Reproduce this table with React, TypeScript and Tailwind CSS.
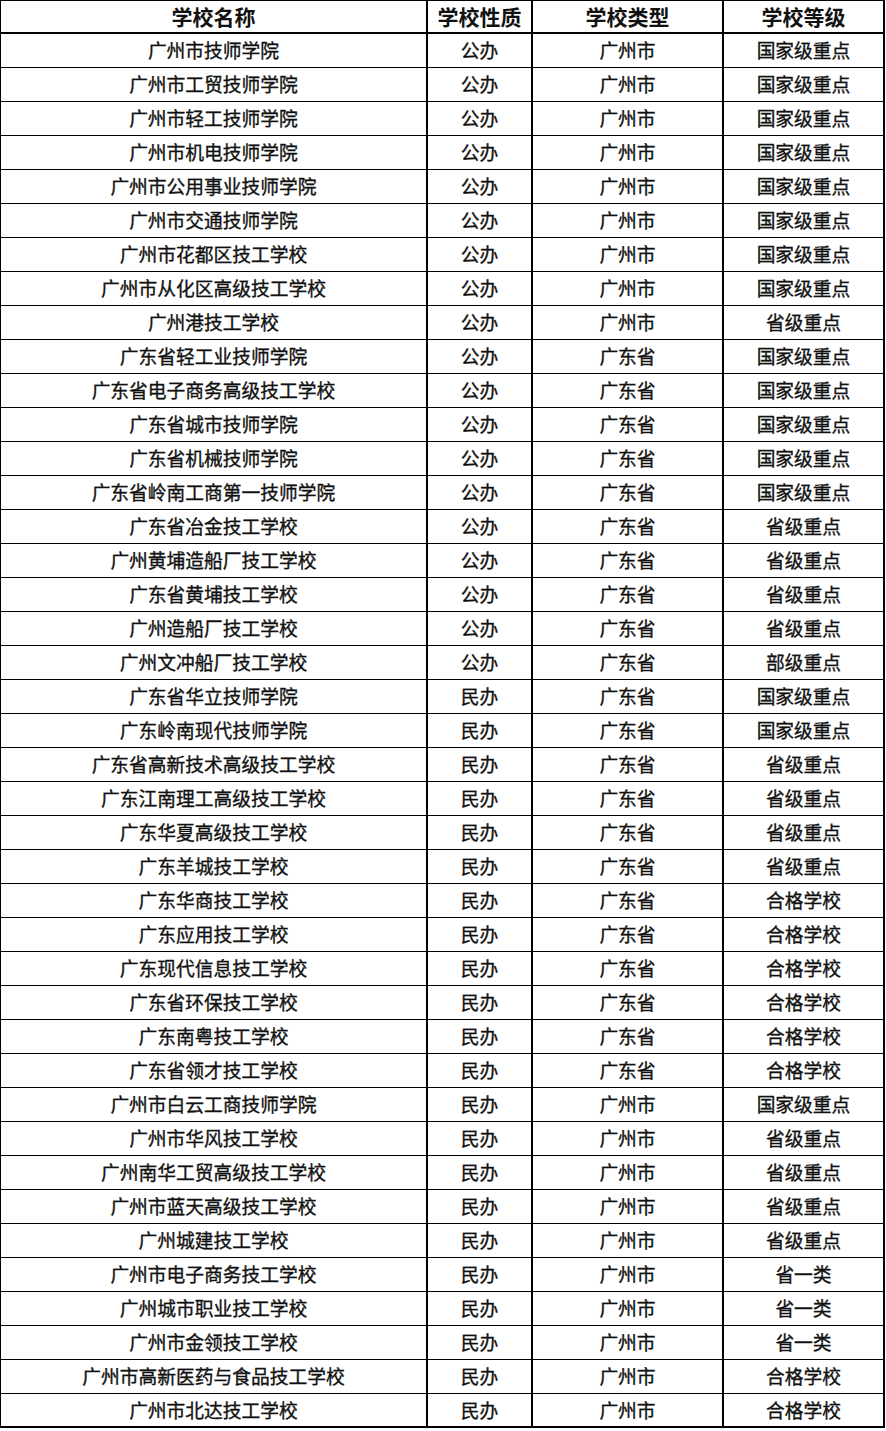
const rows: [string, string, string, string][] = [
  ['广州市技师学院', '公办', '广州市', '国家级重点'],
  ['广州市工贸技师学院', '公办', '广州市', '国家级重点'],
  ['广州市轻工技师学院', '公办', '广州市', '国家级重点'],
  ['广州市机电技师学院', '公办', '广州市', '国家级重点'],
  ['广州市公用事业技师学院', '公办', '广州市', '国家级重点'],
  ['广州市交通技师学院', '公办', '广州市', '国家级重点'],
  ['广州市花都区技工学校', '公办', '广州市', '国家级重点'],
  ['广州市从化区高级技工学校', '公办', '广州市', '国家级重点'],
  ['广州港技工学校', '公办', '广州市', '省级重点'],
  ['广东省轻工业技师学院', '公办', '广东省', '国家级重点'],
  ['广东省电子商务高级技工学校', '公办', '广东省', '国家级重点'],
  ['广东省城市技师学院', '公办', '广东省', '国家级重点'],
  ['广东省机械技师学院', '公办', '广东省', '国家级重点'],
  ['广东省岭南工商第一技师学院', '公办', '广东省', '国家级重点'],
  ['广东省冶金技工学校', '公办', '广东省', '省级重点'],
  ['广州黄埔造船厂技工学校', '公办', '广东省', '省级重点'],
  ['广东省黄埔技工学校', '公办', '广东省', '省级重点'],
  ['广州造船厂技工学校', '公办', '广东省', '省级重点'],
  ['广州文冲船厂技工学校', '公办', '广东省', '部级重点'],
  ['广东省华立技师学院', '民办', '广东省', '国家级重点'],
  ['广东岭南现代技师学院', '民办', '广东省', '国家级重点'],
  ['广东省高新技术高级技工学校', '民办', '广东省', '省级重点'],
  ['广东江南理工高级技工学校', '民办', '广东省', '省级重点'],
  ['广东华夏高级技工学校', '民办', '广东省', '省级重点'],
  ['广东羊城技工学校', '民办', '广东省', '省级重点'],
  ['广东华商技工学校', '民办', '广东省', '合格学校'],
  ['广东应用技工学校', '民办', '广东省', '合格学校'],
  ['广东现代信息技工学校', '民办', '广东省', '合格学校'],
  ['广东省环保技工学校', '民办', '广东省', '合格学校'],
  ['广东南粤技工学校', '民办', '广东省', '合格学校'],
  ['广东省领才技工学校', '民办', '广东省', '合格学校'],
  ['广州市白云工商技师学院', '民办', '广州市', '国家级重点'],
  ['广州市华风技工学校', '民办', '广州市', '省级重点'],
  ['广州南华工贸高级技工学校', '民办', '广州市', '省级重点'],
  ['广州市蓝天高级技工学校', '民办', '广州市', '省级重点'],
  ['广州城建技工学校', '民办', '广州市', '省级重点'],
  ['广州市电子商务技工学校', '民办', '广州市', '省一类'],
  ['广州城市职业技工学校', '民办', '广州市', '省一类'],
  ['广州市金领技工学校', '民办', '广州市', '省一类'],
  ['广州市高新医药与食品技工学校', '民办', '广州市', '合格学校'],
  ['广州市北达技工学校', '民办', '广州市', '合格学校'],
];

const header = ['学校名称', '学校性质', '学校类型', '学校等级'];

function Row({ cells, head, last }: { cells: string[]; head?: boolean; last?: boolean }) {
  return (
    <div
      className={
        'grid h-[34px] grid-cols-[427px_105px_191px_1fr] border-black ' +
        (head
          ? 'border-t border-b-2 text-[21px] font-bold'
          : (last ? 'border-b-2 ' : 'border-b ') + 'text-[18.75px] [-webkit-text-stroke:0.35px_#111]')
      }
    >
      {cells.map((c, i) => (
        <div
          key={i}
          className={'flex items-center justify-center leading-none ' + (i < 3 ? 'border-r-2 border-black' : '')}
        >
          {c}
        </div>
      ))}
    </div>
  );
}

export default function App() {
  return (
    <div className="min-h-[1431px] w-[886px] bg-white text-[#111] [font-family:'Noto_Sans_CJK_SC','Noto_Sans',sans-serif]">
      <div className="w-[885px] border-r-2 border-l border-black">
        <Row cells={header} head />
        {rows.map((r, i) => (
          <Row key={i} cells={r} last={i === rows.length - 1} />
        ))}
      </div>
    </div>
  );
}
